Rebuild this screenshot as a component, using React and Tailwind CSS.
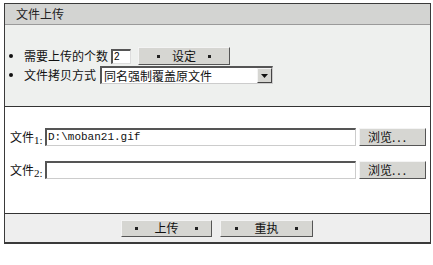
import React from "react";

const cjk = { fontFamily: '"SimSun","Noto Sans CJK SC",sans-serif' };

// classic raised button
const RaisedButton = ({ children, className = "" }) => (
  <button
    className={`flex items-center justify-center bg-[#d6d6d2] border border-t-[#f4f4f4] border-l-[#f4f4f4] border-r-[#555] border-b-[#555] text-[12px] text-[#111] leading-none ${className}`}
  >
    {children}
  </button>
);

const Dot = () => <span className="inline-block w-[3px] h-[3px] bg-[#222]" />;

const App = () => {
  return (
    <div className="w-[433px] h-[265px] bg-white pt-[3px] pl-[4px]" style={cjk}>
      <div className="w-[427px] h-[241px] border border-[#3a3a3a] border-b-2 flex flex-col">
        {/* HEADER */}
        <div className="h-[21px] bg-[#d3d4d2] border-b border-[#9a9a9a] flex items-center pl-[11px] text-[12px] text-[#222]">
          文件上传
        </div>

        {/* SETTINGS */}
        <div className="h-[82px] bg-[#eef0ee] border-b border-[#333] pt-[22px] pl-[4px] flex flex-col">
          <div className="flex items-center h-[18px]">
            <span className="w-[4px] h-[4px] rounded-full bg-[#111]" />
            <span className="ml-[11px] text-[12px] text-[#111]">需要上传的个数</span>
            <div className="ml-[3px] mt-[1px] w-[20px] h-[15px] bg-white border-t-2 border-l-2 border-t-[#555] border-l-[#555] border-r border-b border-r-[#ddd] border-b-[#ddd] text-[10px] leading-[12px] pl-[1px]" style={{ fontFamily: '"Liberation Sans",sans-serif' }}>
              2
            </div>
            <RaisedButton className="ml-[7px] w-[92px] h-[18px] gap-[12px]">
              <Dot />
              <span>设定</span>
              <Dot />
            </RaisedButton>
          </div>
          <div className="flex items-center h-[18px] mt-[1px]">
            <span className="w-[4px] h-[4px] rounded-full bg-[#111]" />
            <span className="ml-[11px] text-[12px] text-[#111]">文件拷贝方式</span>
            <div className="ml-[4px] w-[173px] h-[18px] bg-white border-t-2 border-l-2 border-t-[#555] border-l-[#555] border-r border-b border-r-[#ccc] border-b-[#ccc] flex items-center">
              <span className="flex-1 pl-[2px] text-[12px] text-[#111] leading-none">同名强制覆盖原文件</span>
              <span className="w-[15px] h-[15px] bg-[#d6d6d2] border border-t-[#f4f4f4] border-l-[#f4f4f4] border-r-[#444] border-b-[#444] flex items-center justify-center">
                <svg width="7" height="4" viewBox="0 0 7 4">
                  <path d="M0 0h7L3.5 4z" fill="#111" />
                </svg>
              </span>
            </div>
          </div>
        </div>

        {/* FILES */}
        <div className="h-[107px] bg-white border-b border-[#333] pt-[21px] pl-[5px] flex flex-col gap-[15px]">
          {["D:\\moban21.gif", ""].map((val, i) => (
            <div key={i} className="flex items-center h-[18px]">
              <span className="text-[12px] text-[#111] w-[35px] flex items-end">
                文件<span className="text-[11px] leading-[12px]" style={{ fontFamily: '"Liberation Serif",serif' }}>{i + 1}:</span>
              </span>
              <div className="w-[311px] h-[18px] bg-white border-t-2 border-l-2 border-t-[#555] border-l-[#555] border-r border-b border-r-[#ccc] border-b-[#ccc] text-[11px] leading-[14px] pl-[1px] text-[#111]" style={{ fontFamily: '"Liberation Mono",monospace' }}>
                {val}
              </div>
              <RaisedButton className="ml-[3px] w-[67px] h-[18px] justify-start pl-[8px]">
                浏览<span className="tracking-[2px]">...</span>
              </RaisedButton>
            </div>
          ))}
        </div>

        {/* FOOTER */}
        <div className="flex-1 bg-[#eeeeee] flex items-center justify-center gap-[8px] pr-[1px]">
          <RaisedButton className="w-[91px] h-[17px] gap-[16px]">
            <Dot />
            <span>上传</span>
            <Dot />
          </RaisedButton>
          <RaisedButton className="w-[93px] h-[17px] gap-[16px]">
            <Dot />
            <span>重执</span>
            <Dot />
          </RaisedButton>
        </div>
      </div>
    </div>
  );
};

export default App;
